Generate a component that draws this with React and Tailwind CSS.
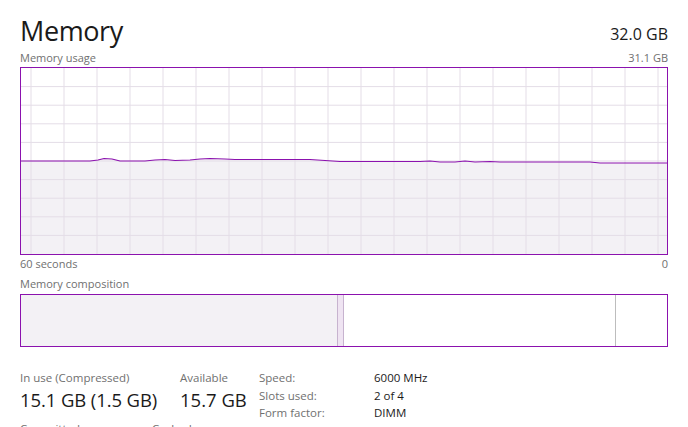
import React from "react";

const FONT = { fontFamily: '"Segoe UI", "Open Sans", "Noto Sans", sans-serif' };

// usage line, x from 0..648, y in graph coords (0..187)
const LINE = [
  [0, 93], [70, 93], [78, 92], [84, 90.5], [92, 91], [100, 93], [125, 93], [135, 92], [145, 91.5], [155, 92.5],
  [170, 92], [180, 91], [190, 90.5], [205, 91], [215, 91.5], [290, 91.5], [305, 92.5], [320, 93.5], [400, 93.5],
  [410, 93], [420, 94], [435, 94], [445, 93], [455, 94], [470, 93.5], [480, 94], [570, 94], [580, 95], [648, 95],
];

function UsageGraph() {
  const W = 648;
  const H = 186;
  const vx = Array.from({ length: 20 }, (_, i) => 11 + i * 33);
  const hy = Array.from({ length: 9 }, (_, i) => (i + 1) * (H / 10));
  const pts = LINE.map(([x, y]) => `${x},${y}`).join(" ");
  return (
    <div className="border border-[#8b12ae] h-[188px] w-[648px] bg-white">
      <svg width={W - 2} height={H} viewBox={`1 0 ${W - 2} ${H}`} className="block">
        <polygon points={`0,${H} ${pts} ${W},${H}`} fill="#f3f1f5" />
        {vx.map((x) => (
          <line key={x} x1={x} x2={x} y1={0} y2={H} stroke="#e4dde7" strokeWidth="1" />
        ))}
        {hy.map((y) => (
          <line key={y} x1={0} x2={W} y1={y} y2={y} stroke="#e4dde7" strokeWidth="1" />
        ))}
        <polyline points={pts} fill="none" stroke="#8b12ae" strokeWidth="1.2" />
      </svg>
    </div>
  );
}

function CompositionBar() {
  return (
    <div className="border border-[#8b12ae] h-[53px] w-[648px] flex bg-white">
      <div className="w-[317px] bg-[#f3f1f5] border-r border-[#c7b3cf]" />
      <div className="w-[6px] bg-[#efe4f2] border-r border-[#c7b3cf]" />
      <div className="w-[272px] bg-white border-r border-[#bdbdbd]" />
      <div className="flex-1 bg-white" />
    </div>
  );
}

export default function App() {
  return (
    <div className="w-[688px] h-[427px] overflow-hidden bg-white px-[20px] text-[#1a1a1a]" style={FONT}>
      <div className="flex justify-between items-end h-[48px]">
        <div className="text-[27px] leading-none pb-[4px] tracking-[-0.4px]">Memory</div>
        <div className="text-[16px] leading-none pb-[6px]">32.0 GB</div>
      </div>
      <div className="flex justify-between text-[11px] leading-[19px] text-[#707070]">
        <span>Memory usage</span>
        <span>31.1 GB</span>
      </div>
      <UsageGraph />
      <div className="flex justify-between text-[11px] leading-[18px] text-[#707070]">
        <span>60 seconds</span>
        <span>0</span>
      </div>
      <div className="text-[11px] leading-[21px] text-[#707070]">Memory composition</div>
      <CompositionBar />
      <div className="flex mt-[22px]">
        <div className="w-[160px]">
          <div className="text-[11.5px] leading-[18px] text-[#707070]">In use (Compressed)</div>
          <div className="text-[18.5px] leading-[26px] tracking-[-0.1px]">15.1 GB (1.5 GB)</div>
          <div className="flex text-[11.5px] leading-[18px] text-[#707070] mt-[7px]">
            <span className="w-[132px] shrink-0">Committed</span>
            <span>Cached</span>
          </div>
        </div>
        <div className="w-[79px]">
          <div className="text-[11.5px] leading-[18px] text-[#707070]">Available</div>
          <div className="text-[18.5px] leading-[26px]">15.7 GB</div>
        </div>
        <div className="flex text-[11.5px] leading-[17.5px]">
          <div className="w-[115px] text-[#707070]">
            <div>Speed:</div>
            <div>Slots used:</div>
            <div>Form factor:</div>
          </div>
          <div>
            <div>6000 MHz</div>
            <div>2 of 4</div>
            <div>DIMM</div>
          </div>
        </div>
      </div>
    </div>
  );
}
